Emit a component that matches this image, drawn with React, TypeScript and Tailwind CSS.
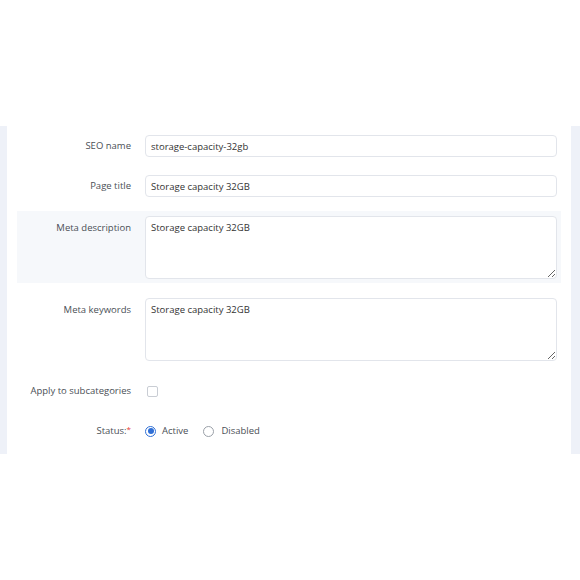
import React from "react";

const font = { fontFamily: '"Open Sans", "Noto Sans", sans-serif' };

function Row({
  label,
  children,
  highlight = false,
  top = false,
  className = "",
}: {
  label: React.ReactNode;
  children: React.ReactNode;
  highlight?: boolean;
  top?: boolean;
  className?: string;
}) {
  return (
    <div
      className={`flex pt-[5px] pb-[4px] pr-[4px] ${top ? "items-start" : "items-center"} ${
        highlight ? "bg-[#f6f8fb]" : ""
      } ${className}`}
    >
      <div
        className={`w-[114px] shrink-0 text-right text-[9.5px] leading-[14px] text-[#4a4f56] ${
          top ? "pt-[5px]" : ""
        }`}
      >
        {label}
      </div>
      <div className="ml-[14px] flex-1">{children}</div>
    </div>
  );
}

export default function App() {
  const inputCls =
    "block w-full h-[22px] rounded-[4px] border border-[#e2e5eb] bg-white px-[5px] text-[9.5px] text-[#333] outline-none";
  const areaCls =
    "block w-full h-[63px] rounded-[4px] border border-[#e2e5eb] bg-white px-[5px] py-[4px] text-[9.5px] leading-[14px] text-[#333] outline-none resize-y";

  return (
    <div className="w-[580px] h-[580px] bg-white" style={font}>
      <div className="h-[126px]" />
      <div className="flex h-[328px]">
        <div className="w-[7px] bg-[#eef1f8]" />
        <div className="flex-1 bg-white px-[10px] pt-[4px]">
          <Row label="SEO name">
            <input className={inputCls} defaultValue="storage-capacity-32gb" />
          </Row>
          <Row label="Page title" className="mt-[9px]">
            <input className={inputCls} defaultValue="Storage capacity 32GB" />
          </Row>
          <Row label="Meta description" top highlight className="mt-[10px]">
            <textarea className={areaCls} defaultValue="Storage capacity 32GB" />
          </Row>
          <Row label="Meta keywords" top className="mt-[10px]">
            <textarea className={areaCls} defaultValue="Storage capacity 32GB" />
          </Row>
          <Row label="Apply to subcategories" className="mt-[10px]">
            <div className="flex h-[22px] items-center">
              <span className="ml-[2px] block h-[11px] w-[11px] rounded-[2px] border border-[#c9cdd4] bg-white" />
            </div>
          </Row>
          <Row
            label={
              <span>
                Status:<span className="relative -top-[2px] text-[8px] text-[#e53935]">*</span>
              </span>
            }
            className="mt-[9px]"
          >
            <div className="flex h-[22px] items-center text-[9.5px] text-[#4a4f56]">
              <span className="flex h-[11px] w-[11px] items-center justify-center rounded-full border border-[#2f6fd6] bg-white">
                <span className="h-[6px] w-[6px] rounded-full bg-[#2f6fd6]" />
              </span>
              <span className="ml-[6px]">Active</span>
              <span className="ml-[15px] h-[11px] w-[11px] rounded-full border border-[#9aa0a8] bg-white" />
              <span className="ml-[7px]">Disabled</span>
            </div>
          </Row>
        </div>
        <div className="w-[9px] bg-[#eef1f8]" />
      </div>
    </div>
  );
}
